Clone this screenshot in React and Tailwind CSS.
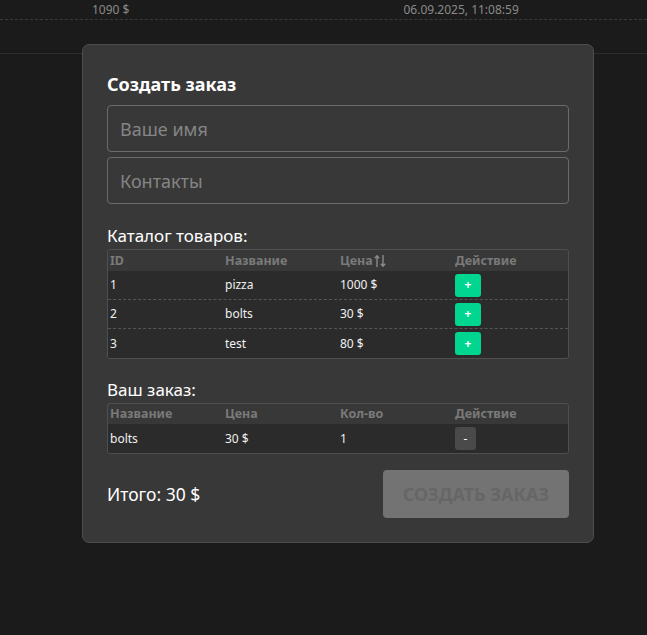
import React from "react";

const font = { fontFamily: '"Noto Sans", "Open Sans", sans-serif' };

function Th({ children }) {
  return <div className="flex-1 pl-[2px] text-[12.5px] font-bold text-[#7a7a7a] leading-[20px] flex items-center">{children}</div>;
}

function Cell({ children }) {
  return <div className="flex-1 pl-[2px] text-[12px] text-[#f0f0f0] flex items-center">{children}</div>;
}

function SortArrows() {
  return (
    <svg width="12" height="14" viewBox="0 0 12 14" className="ml-[1px]" fill="none" stroke="#8a8a8a" strokeWidth="1.4">
      <path d="M3 13V2M0.8 4.2L3 1.8L5.2 4.2" />
      <path d="M9 1V12M6.8 9.8L9 12.2L11.2 9.8" />
    </svg>
  );
}

export default function App() {
  const catalog = [
    ["1", "pizza", "1000 $"],
    ["2", "bolts", "30 $"],
    ["3", "test", "80 $"],
  ];
  return (
    <div className="relative w-[647px] h-[635px] bg-[#1b1b1b] overflow-hidden" style={font}>
      <div className="h-[20px] border-b border-dashed border-[#3a3a3a] flex items-center text-[12px] text-[#8a8a8a]">
        <span className="ml-[92px]">1090 $</span>
        <span className="ml-[274px]">06.09.2025, 11:08:59</span>
      </div>
      <div className="h-[34px] border-b border-[#2e2e2e]" />

      <div className="absolute left-[82px] top-[44px] w-[512px] h-[499px] bg-[#383838] border border-[#4d4d4d] rounded-[7px] px-[24px] pt-[25px]">
        <h2 className="text-[18px] font-bold text-white leading-[28px] mb-[7px]">Создать заказ</h2>
        <input
          placeholder="Ваше имя"
          className="block w-full h-[47px] rounded-[4px] border border-[#6b6b6b] bg-transparent px-[12px] text-[18px] text-white placeholder:text-[#858585] outline-none"
        />
        <input
          placeholder="Контакты"
          className="block w-full h-[47px] mt-[5px] rounded-[4px] border border-[#6b6b6b] bg-transparent px-[12px] text-[18px] text-white placeholder:text-[#858585] outline-none"
        />

        <div className="mt-[21px] text-[17px] text-white leading-[22px]">Каталог товаров:</div>
        <div className="mt-[2px] border border-[#4f4f4f] rounded-[3px] overflow-hidden">
          <div className="flex h-[21px] items-center">
            <Th>ID</Th>
            <Th>Название</Th>
            <Th>
              <span>Цена</span>
              <SortArrows />
            </Th>
            <Th>Действие</Th>
          </div>
          {catalog.map((r, i) => (
            <div
              key={r[0]}
              className={
                "flex h-[29px] bg-[#2b2b2b] " + (i < catalog.length - 1 ? "border-b border-dashed border-[#555]" : "")
              }
            >
              <Cell>{r[0]}</Cell>
              <Cell>{r[1]}</Cell>
              <Cell>{r[2]}</Cell>
              <Cell>
                <button className="w-[26px] h-[23px] rounded-[3px] bg-[#00d68f] text-white text-[12px] font-bold leading-none">
                  +
                </button>
              </Cell>
            </div>
          ))}
        </div>

        <div className="mt-[20px] text-[17px] text-white leading-[22px]">Ваш заказ:</div>
        <div className="mt-[2px] border border-[#4f4f4f] rounded-[3px] overflow-hidden">
          <div className="flex h-[20px] items-center">
            <Th>Название</Th>
            <Th>Цена</Th>
            <Th>Кол-во</Th>
            <Th>Действие</Th>
          </div>
          <div className="flex h-[29px] bg-[#2b2b2b]">
            <Cell>bolts</Cell>
            <Cell>30 $</Cell>
            <Cell>1</Cell>
            <Cell>
              <button className="w-[21px] h-[23px] rounded-[3px] bg-[#4a4a4a] text-white text-[12px] leading-none">-</button>
            </Cell>
          </div>
        </div>

        <div className="mt-[16px] flex items-center justify-between">
          <div className="text-[17.5px] text-white">Итого: 30 $</div>
          <button className="w-[186px] h-[48px] rounded-[4px] bg-[#737373] text-[#666] text-[18px] font-bold uppercase">
            Создать заказ
          </button>
        </div>
      </div>
    </div>
  );
}
